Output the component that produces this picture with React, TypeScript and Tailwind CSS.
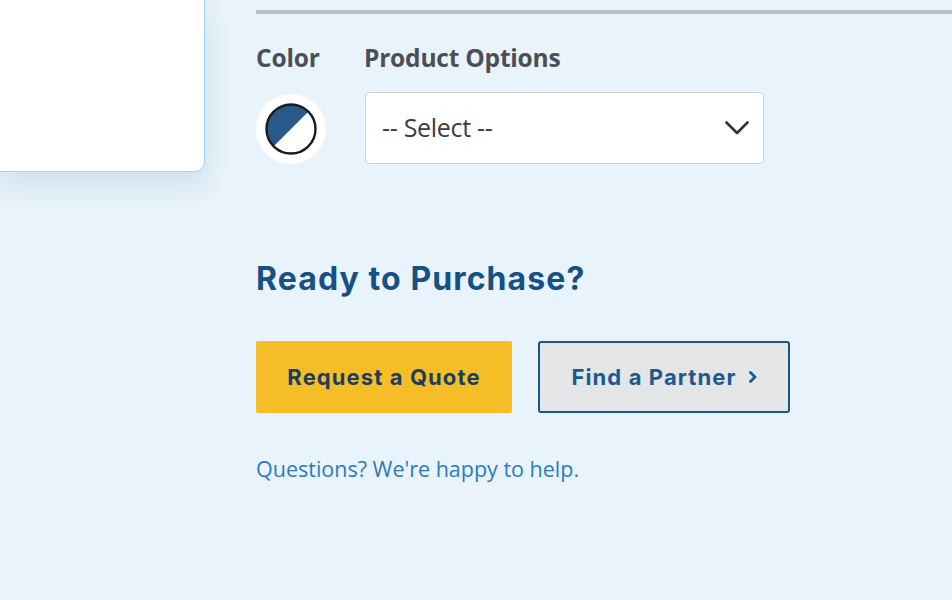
import React from "react";

export default function App() {
  return (
    <div className="w-[952px] h-[600px] overflow-hidden bg-[#e8f3fb] flex" style={{ fontFamily: "Lato, 'Open Sans', sans-serif" }}>
      <div className="w-[205px] shrink-0">
        <div className="h-[172px] bg-white border-r border-b border-[#a9d3ee] rounded-br-[10px] shadow-[0_12px_28px_rgba(40,70,100,0.12)]" />
      </div>
      <div className="ml-[51px] flex-1 flex flex-col">
        <div className="mt-[10px] h-[4px] bg-[#bfc0c2]" />
        <div className="mt-[26px] flex">
          <div className="w-[108px] flex flex-col">
            <div className="text-[24.5px] leading-[36px] font-bold text-[#4a4e56] tracking-[-0.2px]" style={{ fontFamily: "'Open Sans', sans-serif" }}>Color</div>
            <div className="mt-[18px] w-[70px] h-[70px] rounded-full bg-white flex items-center justify-center">
              <svg width="52" height="52" viewBox="0 0 52 52">
                <clipPath id="c">
                  <circle cx="26" cy="26" r="24.5" />
                </clipPath>
                <g clipPath="url(#c)">
                  <rect x="0" y="0" width="52" height="52" fill="#ffffff" />
                  <polygon points="0,0 52,0 0,52" fill="#275a88" />
                </g>
                <circle cx="26" cy="26" r="24.5" fill="none" stroke="#1b1b1b" strokeWidth="2.4" />
              </svg>
            </div>
          </div>
          <div className="flex flex-col">
            <div className="text-[24.5px] leading-[36px] font-bold text-[#4a4e56] tracking-[-0.2px]" style={{ fontFamily: "'Open Sans', sans-serif" }}>Product Options</div>
            <div className="mt-[16px] ml-[1px] w-[399px] h-[72px] bg-white border border-[#cfd2d6] rounded-[4px] flex items-center justify-between pl-[16px] pr-[14px]">
              <span className="text-[25px] text-[#3d3d3d] tracking-[-0.3px]" style={{ fontFamily: "'Open Sans', sans-serif" }}>-- Select --</span>
              <svg width="24" height="14" viewBox="0 0 24 14">
                <polyline points="1.5,1.5 12,12 22.5,1.5" fill="none" stroke="#333333" strokeWidth="2.6" strokeLinecap="round" strokeLinejoin="round" />
              </svg>
            </div>
          </div>
        </div>
        <div className="mt-[95px] text-[32px] leading-[40px] font-bold text-[#175184] tracking-[1.1px]" style={{ fontFamily: "Inter, sans-serif" }}>Ready to Purchase?</div>
        <div className="mt-[42px] flex gap-[26px]">
          <div className="w-[256px] h-[72px] bg-[#f5be29] rounded-[2px] flex items-center justify-center text-[22px] font-bold text-[#1c3d5d] tracking-[1.1px]" style={{ fontFamily: "Inter, sans-serif" }}>Request a Quote</div>
          <div className="w-[252px] h-[72px] bg-[#e4e5e7] border-2 border-[#1f5585] rounded-[3px] flex items-center justify-center gap-[12px] text-[22px] font-bold text-[#1b5a8f] tracking-[1.1px]" style={{ fontFamily: "Inter, sans-serif" }}>
            <span>Find a Partner</span>
            <svg width="8" height="12" viewBox="0 0 8 12">
              <polyline points="1.5,1.5 6,6 1.5,10.5" fill="none" stroke="#1b5a8f" strokeWidth="2.8" strokeLinecap="round" strokeLinejoin="round" />
            </svg>
          </div>
        </div>
        <div className="mt-[40px] text-[21.5px] text-[#2e7abd]" style={{ fontFamily: "'Open Sans', sans-serif" }}>Questions? We're happy to help.</div>
      </div>
    </div>
  );
}
